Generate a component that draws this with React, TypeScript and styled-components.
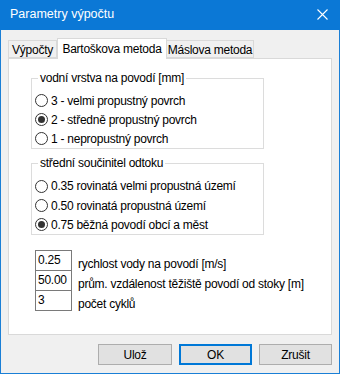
import React from "react";
import styled, { createGlobalStyle } from "styled-components";

const Global = createGlobalStyle`
  html, body { margin: 0; padding: 0; background: #f0f0f0; }
  * { box-sizing: border-box; }
`;

const Window = styled.div`
  width: 340px;
  height: 374px;
  border: 1px solid #1a7fd6;
  border-top: none;
  background: #f0f0f0;
  display: flex;
  flex-direction: column;
  font-family: "Liberation Sans", Arial, sans-serif;
  font-size: 12px;
  letter-spacing: -0.25px;
  color: #000;
`;

const TitleBar = styled.div`
  height: 30px;
  margin: 0 -1px;
  background: #0b78d6;
  display: flex;
  align-items: center;
  justify-content: space-between;
  padding: 0 10px 2px 10px;
  color: #fff;
  font-size: 12.5px;
  letter-spacing: 0;
`;

const CloseBtn = styled.div`
  width: 14px;
  height: 14px;
  display: flex;
  align-items: center;
  justify-content: center;
  margin-right: 1px;
`;

const Body = styled.div`
  flex: 1;
  display: flex;
  flex-direction: column;
  padding: 8px 7px 0 7px;
`;

const TabStrip = styled.div`
  display: flex;
  align-items: flex-end;
  height: 20px;
  position: relative;
  z-index: 1;
`;

const Tab = styled.div<{ $active?: boolean; $first?: boolean; $w: number }>`
  width: ${(p) => p.$w}px;
  height: ${(p) => (p.$active ? 21 : 18)}px;
  margin-bottom: ${(p) => (p.$active ? -1 : 0)}px;
  background: ${(p) => (p.$active ? "#fff" : "#f0f0f0")};
  border-top: 1px solid #d9d9d9;
  border-right: 1px solid #d9d9d9;
  border-bottom: ${(p) => (p.$active ? "none" : "1px solid #d9d9d9")};
  border-left: ${(p) => (p.$first || p.$active ? "1px solid #d9d9d9" : "none")};
  display: flex;
  align-items: center;
  justify-content: center;
  padding-top: ${(p) => (p.$active ? 0 : 1)}px;
  white-space: nowrap;
`;

const Panel = styled.div`
  height: 277px;
  background: #fff;
  border: 1px solid #d9d9d9;
  display: flex;
  flex-direction: column;
  padding: 12px 0 0 22px;
`;

const Group = styled.fieldset`
  margin: 0;
  width: 233px;
  border: 1px solid #dcdcdc;
  padding: 6px 0 0 3px;
  display: flex;
  flex-direction: column;
  & + & {
    margin-top: 7px;
  }
`;

const Legend = styled.legend`
  padding: 0 2px;
  margin-left: 3px;
  line-height: 14px;
`;

const RadioRow = styled.div<{ $h: number }>`
  height: ${(p) => p.$h}px;
  display: flex;
  align-items: center;
  gap: 3px;
  white-space: nowrap;
`;

const RadioCircle = styled.span<{ $checked?: boolean }>`
  width: 13px;
  height: 13px;
  border-radius: 50%;
  border: 1px solid #333;
  background: #fff;
  display: flex;
  align-items: center;
  justify-content: center;
  flex: none;
  &::after {
    content: "";
    width: 7px;
    height: 7px;
    border-radius: 50%;
    background: ${(p) => (p.$checked ? "#333" : "transparent")};
  }
`;

const Fields = styled.div`
  display: flex;
  flex-direction: column;
  margin-top: 15px;
  padding-left: 4px;
`;

const FieldRow = styled.div`
  display: flex;
  align-items: flex-start;
  gap: 6px;
  & + & {
    margin-top: -1px;
  }
`;

const Input = styled.div`
  width: 37px;
  height: 21px;
  border: 1px solid #7a7a7a;
  background: #fff;
  padding: 1px 0 0 2px;
  line-height: 16px;
  flex: none;
`;

const FieldLabel = styled.span`
  padding-top: 7px;
  line-height: 14px;
  white-space: nowrap;
`;

const Buttons = styled.div`
  display: flex;
  justify-content: flex-end;
  gap: 7px;
  padding-top: 9px;
`;

const Button = styled.div<{ $default?: boolean; $w: number }>`
  width: ${(p) => p.$w}px;
  height: 21px;
  background: #e1e1e1;
  border: 1px solid ${(p) => (p.$default ? "#0078d7" : "#adadad")};
  box-shadow: ${(p) => (p.$default ? "inset 0 0 0 1px #0078d7" : "none")};
  display: flex;
  align-items: center;
  justify-content: center;
`;

export default function App() {
  return (
    <>
      <Global />
      <Window>
        <TitleBar>
          <span>Parametry výpočtu</span>
          <CloseBtn>
            <svg width="11" height="11" viewBox="0 0 11 11">
              <path d="M0.5 0.5 L10.5 10.5 M10.5 0.5 L0.5 10.5" stroke="#fff" strokeWidth="1.1" />
            </svg>
          </CloseBtn>
        </TitleBar>
        <Body>
          <TabStrip>
            <Tab $w={49} $first>Výpočty</Tab>
            <Tab $w={110} $active>Bartoškova metoda</Tab>
            <Tab $w={87}>Máslova metoda</Tab>
          </TabStrip>
          <Panel>
            <Group>
              <Legend>vodní vrstva na povodí [mm]</Legend>
              <RadioRow $h={19}><RadioCircle />3 - velmi propustný povrch</RadioRow>
              <RadioRow $h={19}><RadioCircle $checked />2 - středně propustný povrch</RadioRow>
              <RadioRow $h={19}><RadioCircle />1 - nepropustný povrch</RadioRow>
            </Group>
            <Group>
              <Legend>střední součinitel odtoku</Legend>
              <RadioRow $h={20}><RadioCircle />0.35 rovinatá velmi propustná území</RadioRow>
              <RadioRow $h={19}><RadioCircle />0.50 rovinatá propustná území</RadioRow>
              <RadioRow $h={19}><RadioCircle $checked />0.75 běžná povodí obcí a měst</RadioRow>
            </Group>
            <Fields>
              <FieldRow>
                <Input>0.25</Input>
                <FieldLabel>rychlost vody na povodí [m/s]</FieldLabel>
              </FieldRow>
              <FieldRow>
                <Input>50.00</Input>
                <FieldLabel>prům. vzdálenost těžiště povodí od stoky [m]</FieldLabel>
              </FieldRow>
              <FieldRow>
                <Input>3</Input>
                <FieldLabel>počet cyklů</FieldLabel>
              </FieldRow>
            </Fields>
          </Panel>
          <Buttons>
            <Button $w={74}>Ulož</Button>
            <Button $w={73} $default>OK</Button>
            <Button $w={73}>Zrušit</Button>
          </Buttons>
        </Body>
      </Window>
    </>
  );
}
